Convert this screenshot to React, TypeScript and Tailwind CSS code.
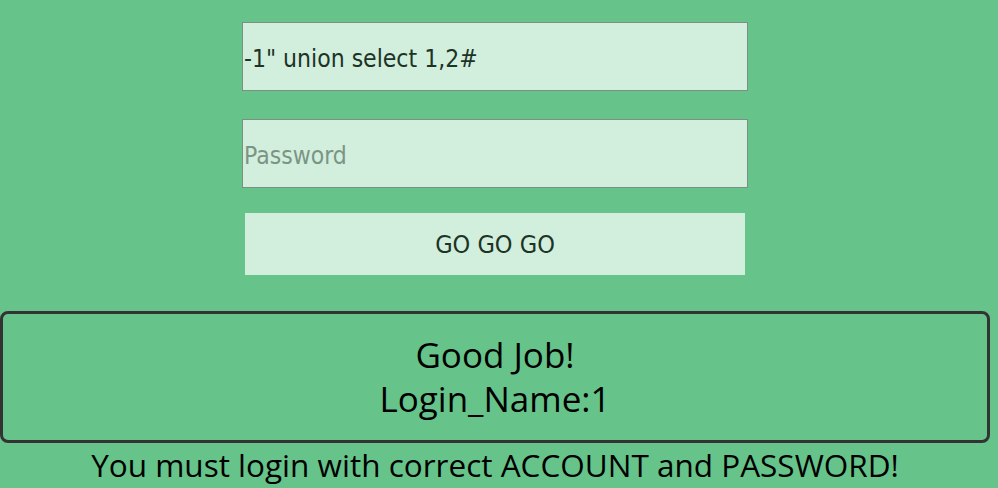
import React from 'react';

const field =
  "w-[506px] h-[69px] bg-[#d2eedd] border border-[#7c8f84] px-[1px] pt-[3px] text-[24.5px] text-[#1c3325] outline-none font-['DejaVu_Sans_Condensed','DejaVu_Sans',sans-serif]";

export default function App() {
  return (
    <div className="w-[998px] h-[488px] bg-[#66c48a] overflow-hidden">
      <div className="w-[990px] flex flex-col items-center pt-[22px]">
        <input defaultValue={'-1" union select 1,2#'} className={field} />
        <input
          placeholder="Password"
          className={`mt-[28px] ${field} placeholder:text-[#7b9585]`}
        />
        <button className="mt-[25px] w-[500px] h-[62px] pt-[2px] bg-[#d2eedd] text-[25px] text-[#1c3325] font-['DejaVu_Sans_Condensed','DejaVu_Sans',sans-serif]">
          GO GO GO
        </button>
        <div className="mt-[36px] w-[990px] h-[132px] border-[3px] border-[#333] rounded-[8px] flex flex-col items-center justify-center text-[35px] leading-[44px] text-black font-['Open_Sans',sans-serif]">
          <div>Good Job!</div>
          <div>Login_Name:1</div>
        </div>
        <div className="text-[31.5px] leading-[44px] text-black font-['Open_Sans',sans-serif]">
          You must login with correct ACCOUNT and PASSWORD!
        </div>
      </div>
    </div>
  );
}
